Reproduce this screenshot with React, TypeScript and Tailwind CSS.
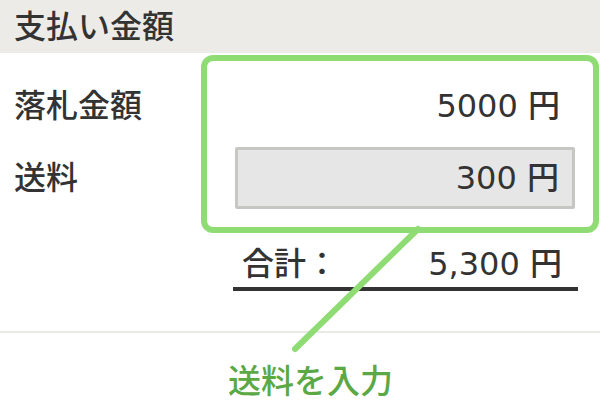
import React from "react";

export default function App() {
  return (
    <div
      className="relative w-[600px] h-[404px] overflow-hidden bg-white text-[#333333] font-medium"
      style={{ fontFamily: '"DejaVu Sans", "Noto Sans CJK JP", sans-serif' }}
    >
      <div className="h-[53px] bg-[#edebe7] flex items-center pl-[14px] text-[32px] leading-none">
        支払い金額
      </div>

      <div className="mt-[18px] h-[70px] flex items-center justify-between pl-[14px] pr-[40px]">
        <span className="text-[32px] leading-none">落札金額</span>
        <span className="text-[32px] leading-none">5000 円</span>
      </div>

      <div className="mt-[6px] h-[62px] flex items-center pl-[14px]">
        <span className="w-[221px] text-[32px] leading-none">送料</span>
        <div className="w-[340px] h-[62px] bg-[#e6e6e6] border-[3px] border-[#c6c6c2] rounded-[2px] flex items-center justify-end pr-[13px] text-[32px] leading-none">
          300 円
        </div>
      </div>

      <div className="mt-[31px] ml-[233px] w-[345px] h-[51px] border-b-[4px] border-[#333333] flex items-center justify-between pl-[9px] pr-[16px] text-[32px] leading-none">
        <span>合計：</span>
        <span>5,300 円</span>
      </div>

      <div className="mt-[40px] h-[2px] bg-[#ebe9e4]" />

      <div className="mt-[33px] pl-[228px] text-[33px] leading-[32px] text-[#5ba845]">
        送料を入力
      </div>

      <div className="absolute left-[201px] top-[55px] w-[398px] h-[178px] border-[6px] border-[#90dc74] rounded-[12px]" />

      <svg className="absolute left-0 top-0" width="600" height="404" viewBox="0 0 600 404">
        <line x1="418" y1="229" x2="295" y2="349" stroke="#90dc74" strokeWidth="6" strokeLinecap="round" />
      </svg>
    </div>
  );
}
